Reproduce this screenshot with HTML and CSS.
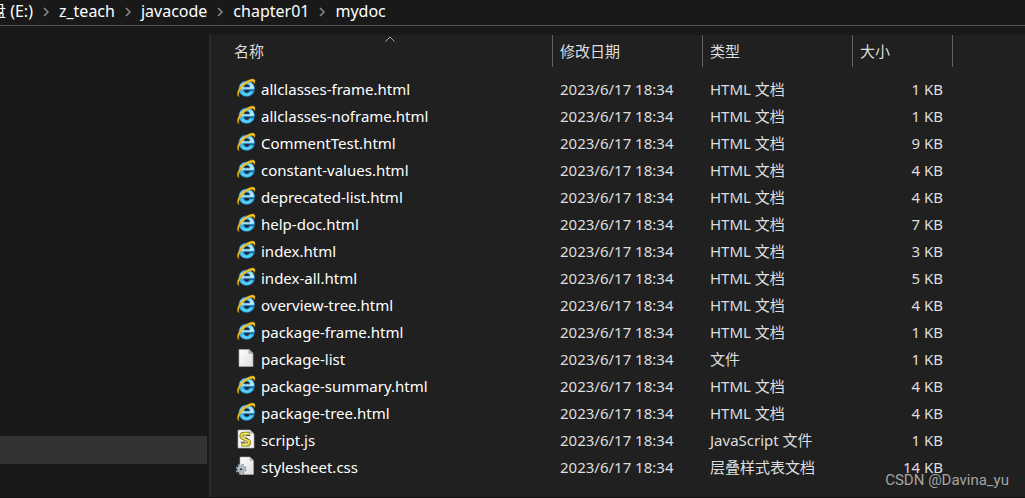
FILE: index.html
```html
<!DOCTYPE html>
<html lang="zh-CN">
<head>
<meta charset="utf-8">
<title>mydoc</title>
<link rel="stylesheet" href="styles.css">
</head>
<body>
<svg class="defs" aria-hidden="true">
  <defs>
    <linearGradient id="blue" x1="0" y1="0" x2="0" y2="1">
      <stop offset="0" stop-color="#6fcdf6"/><stop offset=".45" stop-color="#c4efff"/><stop offset=".6" stop-color="#3fb4ee"/><stop offset="1" stop-color="#62e0fa"/>
    </linearGradient>
    <linearGradient id="paper" x1="0" y1="0" x2="1" y2="1">
      <stop offset="0" stop-color="#ffffff"/><stop offset="1" stop-color="#dcdcdc"/>
    </linearGradient>
    <symbol id="ie" viewBox="0 0 20 20">
      <path d="M18.300 12.800C17.300 16.400 14.400 18.300 10.800 18.300C6.200 18.300 3 15.200 3 10.700C3 6.200 6.200 3 10.800 3C15.700 3 18.700 6.300 18.500 11.800H7.700C7.900 13.700 9.100 14.900 10.900 14.900C12.200 14.900 13.100 14.200 13.600 12.800ZM7.800 9H13.800C13.600 7.300 12.500 6.300 10.900 6.300C9.200 6.300 8.100 7.300 7.800 9Z" fill="url(#blue)" stroke="#1b78bd" stroke-width=".8" fill-rule="evenodd"/>
      <path d="M3 18.800C-.6 17.200 2 10.400 7.400 5.600C11.600 1.800 17.400-.4 18.800 1.900C19.500 3.100 18.900 4.700 18.200 5.900C18.200 2.500 14.200 2.800 9.600 6.300C5 9.800 1.600 15.400 3 18.800Z" fill="#f6c824" stroke="#a87c10" stroke-width=".4"/>
    </symbol>
    <symbol id="page" viewBox="0 0 20 20">
      <path d="M3 1.500H13L17 5.500V18.500H3Z" fill="url(#paper)" stroke="#a8a8a8" stroke-width=".7"/>
      <path d="M13 1.500V5.500H17Z" fill="#bdbdbd" stroke="#8e8e8e" stroke-width=".6"/>
    </symbol>
    <symbol id="script" viewBox="0 0 20 20">
      <path d="M2 1H14L18 5V19H2Z" fill="#f7f7f7" stroke="#aaa" stroke-width=".7"/>
      <path d="M14 1V5H18Z" fill="#c4c4c4"/>
      <path d="M14 4.600H8.200C4.600 4.600 4.800 8 7 9L11.600 11.400C14.400 13 13.400 15.600 10.600 15.600H5.400" fill="none" stroke="#77711f" stroke-width="3.800"/>
      <path d="M13.600 4.600H8.200C4.600 4.600 4.800 8 7 9L11.600 11.400C14.400 13 13.400 15.600 10.600 15.600H5.800" fill="none" stroke="#e8d748" stroke-width="2.400"/>
      <path d="M8.600 4.800H11M7.600 8L12 10.800M7.600 15.400H11" stroke="#fff9b5"/>
      <path d="M10 6.600H14.400M4.600 13.200H9.400M9 8.600L12.500 10.500" stroke="#4e4d38"/>
    </symbol>
    <symbol id="css" viewBox="0 0 20 20">
      <path d="M4 1H14L17.500 4.500V18.500H4Z" fill="url(#paper)" stroke="#aaa" stroke-width=".6"/>
      <path d="M14 1V4.500H17.500Z" fill="#bdbdbd" stroke="#999" stroke-width=".5"/>
      <circle cx="5" cy="13.200" r="4.500" fill="none" stroke="#8b979f" stroke-width="2" stroke-dasharray="2 1.530"/>
      <circle cx="5" cy="13.200" r="3" fill="#d6e0e8" stroke="#a4b2bd" stroke-width="1.800"/>
      <circle cx="5" cy="13.200" r="1.300" fill="#3d454c"/>
    </symbol>
    <symbol id="chevron" viewBox="0 0 8 10">
      <path d="M2 1L6 5L2 9" fill="none" stroke="#8a8a8a" stroke-width="1.500"/>
    </symbol>
  </defs>
</svg>
<div class="window">
  <nav class="path" aria-label="路径">
    <a href="#">盘 (E:)</a><svg class="sep"><use href="#chevron"/></svg>
    <a href="#">z_teach</a><svg class="sep"><use href="#chevron"/></svg>
    <a href="#">javacode</a><svg class="sep"><use href="#chevron"/></svg>
    <a href="#">chapter01</a><svg class="sep"><use href="#chevron"/></svg>
    <a href="#">mydoc</a>
  </nav>
  <div class="content">
    <aside class="tree"><div class="tree-selected"></div></aside>
    <main class="files">
      <table class="list">
        <colgroup><col class="col-name"><col class="col-date"><col class="col-type"><col class="col-size"></colgroup>
        <thead>
          <tr><th class="sorted">名称<svg class="sort" viewBox="0 0 10 6"><path d="M.5 5.500L5 1L9.500 5.500" fill="none" stroke="#aaa"/></svg></th><th>修改日期</th><th>类型</th><th>大小</th></tr>
        </thead>
        <tbody>
          <tr><td><span class="file"><svg class="icon"><use href="#ie"/></svg>allclasses-frame.html</span></td><td>2023/6/17 18:34</td><td>HTML 文档</td><td>1 KB</td></tr>
          <tr><td><span class="file"><svg class="icon"><use href="#ie"/></svg>allclasses-noframe.html</span></td><td>2023/6/17 18:34</td><td>HTML 文档</td><td>1 KB</td></tr>
          <tr><td><span class="file"><svg class="icon"><use href="#ie"/></svg>CommentTest.html</span></td><td>2023/6/17 18:34</td><td>HTML 文档</td><td>9 KB</td></tr>
          <tr><td><span class="file"><svg class="icon"><use href="#ie"/></svg>constant-values.html</span></td><td>2023/6/17 18:34</td><td>HTML 文档</td><td>4 KB</td></tr>
          <tr><td><span class="file"><svg class="icon"><use href="#ie"/></svg>deprecated-list.html</span></td><td>2023/6/17 18:34</td><td>HTML 文档</td><td>4 KB</td></tr>
          <tr><td><span class="file"><svg class="icon"><use href="#ie"/></svg>help-doc.html</span></td><td>2023/6/17 18:34</td><td>HTML 文档</td><td>7 KB</td></tr>
          <tr><td><span class="file"><svg class="icon"><use href="#ie"/></svg>index.html</span></td><td>2023/6/17 18:34</td><td>HTML 文档</td><td>3 KB</td></tr>
          <tr><td><span class="file"><svg class="icon"><use href="#ie"/></svg>index-all.html</span></td><td>2023/6/17 18:34</td><td>HTML 文档</td><td>5 KB</td></tr>
          <tr><td><span class="file"><svg class="icon"><use href="#ie"/></svg>overview-tree.html</span></td><td>2023/6/17 18:34</td><td>HTML 文档</td><td>4 KB</td></tr>
          <tr><td><span class="file"><svg class="icon"><use href="#ie"/></svg>package-frame.html</span></td><td>2023/6/17 18:34</td><td>HTML 文档</td><td>1 KB</td></tr>
          <tr><td><span class="file"><svg class="icon"><use href="#page"/></svg>package-list</span></td><td>2023/6/17 18:34</td><td>文件</td><td>1 KB</td></tr>
          <tr><td><span class="file"><svg class="icon"><use href="#ie"/></svg>package-summary.html</span></td><td>2023/6/17 18:34</td><td>HTML 文档</td><td>4 KB</td></tr>
          <tr><td><span class="file"><svg class="icon"><use href="#ie"/></svg>package-tree.html</span></td><td>2023/6/17 18:34</td><td>HTML 文档</td><td>4 KB</td></tr>
          <tr><td><span class="file"><svg class="icon"><use href="#script"/></svg>script.js</span></td><td>2023/6/17 18:34</td><td>JavaScript 文件</td><td>1 KB</td></tr>
          <tr><td><span class="file"><svg class="icon"><use href="#css"/></svg>stylesheet.css</span></td><td>2023/6/17 18:34</td><td>层叠样式表文档</td><td>14 KB</td></tr>
        </tbody>
      </table>
    </main>
  </div>
  <div class="watermark">CSDN @Davina_yu</div>
</div>
</body>
</html>
```
FILE: styles.css
```css
* { box-sizing: border-box; }
body {
  margin: 0;
  background: #191919;
  color: #dedede;
  font: 15px/27px "Noto Sans", "Noto Sans CJK SC", sans-serif;
}
.defs { position: absolute; width: 0; height: 0; }
.window {
  position: relative;
  display: flex;
  flex-direction: column;
  min-height: 100vh;
  overflow: hidden;
  border-bottom: 1px solid #111;
}
.path {
  display: flex;
  align-items: center;
  height: 26px;
  padding-bottom: 2px;
  border-bottom: 1px solid #535353;
  font-size: 16px;
  white-space: nowrap;
}
.path a { color: #fff; text-decoration: none; }
.path a:first-child { margin-left: -10px; }
.sep { width: 8px; height: 10px; margin: 0 9px; }
.content { display: flex; flex: 1; padding-top: 9px; }
.tree {
  display: flex;
  flex-direction: column;
  justify-content: flex-end;
  width: 211px;
  padding: 0 2px 33px 0;
  border-right: 2px solid #2b2b2b;
}
.tree-selected { height: 28px; background: #333; }
.files { flex: 1; background: #202020; }
.list { table-layout: fixed; border-collapse: separate; border-spacing: 0; width: 742px; }
.col-name { width: 342px; }
.col-date, .col-type { width: 150px; }
.col-size { width: 100px; }
th {
  height: 32px;
  padding: 0 0 0 7px;
  border-right: 1px solid #636363;
  font-weight: 400;
  text-align: left;
}
th.sorted { position: relative; padding-left: 23px; }
.sort { position: absolute; top: 1px; right: 157px; width: 10px; height: 6px; }
tbody::before { content: ""; display: block; height: 9px; }
td { height: 27px; padding: 0 0 0 7px; white-space: nowrap; }
td:first-child { padding-left: 25px; color: #fff; }
td:last-child { padding-right: 10px; text-align: right; }
.file { display: flex; align-items: center; gap: 5px; }
.icon { width: 20px; height: 20px; margin-bottom: 3px; }
.watermark {
  position: absolute;
  right: 16px;
  bottom: 7px;
  color: #a4a4a4;
  font: 15px/20px Roboto, sans-serif;
}
```
